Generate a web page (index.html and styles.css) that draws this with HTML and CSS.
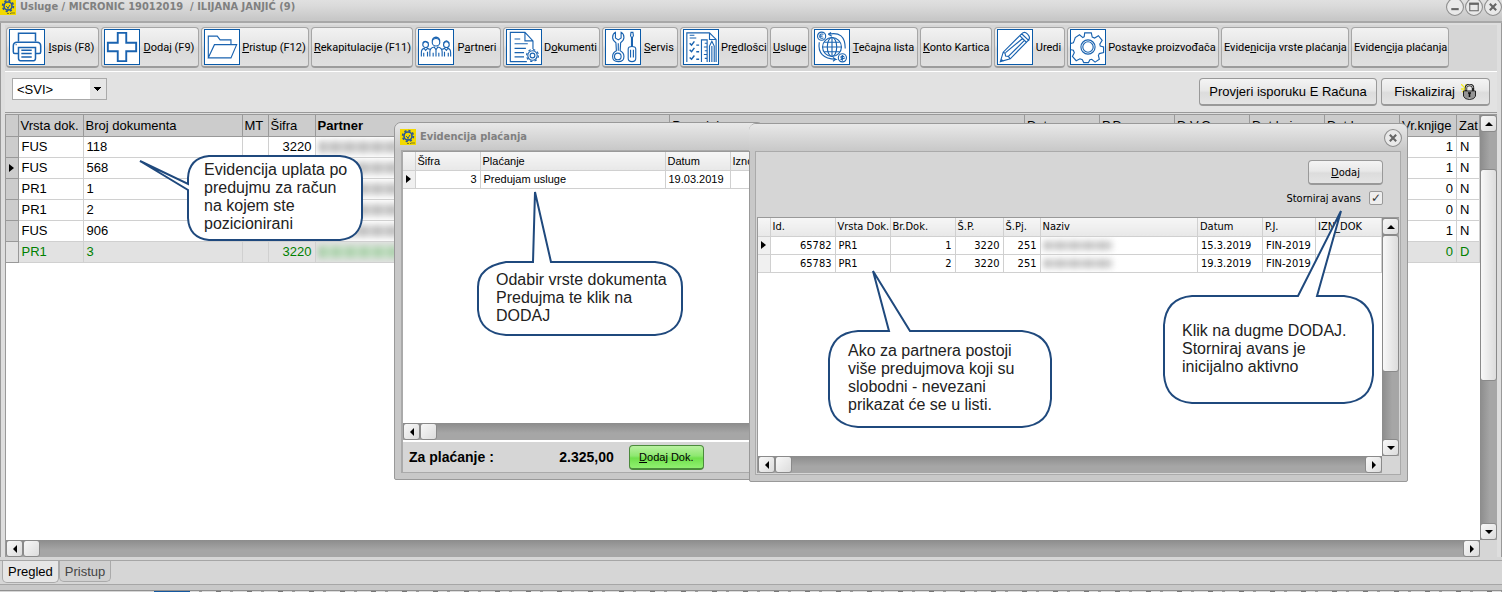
FILE: index.html
```html
<!DOCTYPE html>
<html lang="hr">
<head>
<meta charset="utf-8">
<title>Usluge / MICRONIC</title>
<link rel="stylesheet" href="styles.css">
</head>
<body>
<svg class="defs" width="0" height="0" aria-hidden="true">
  <symbol id="logo" viewBox="0 0 16 16">
    <rect width="16" height="16" fill="#f3d900"/>
    <circle cx="8" cy="7" r="4" fill="none" stroke="#27569a" stroke-width="1.6"/>
    <circle cx="8" cy="7" r="5.4" fill="none" stroke="#27569a" stroke-width="1.6" stroke-dasharray="2.2 2"/>
    <path d="M6 7l2 2 2-3M8 9v3" fill="none" stroke="#27569a"/>
    <path d="M7 14.5h2M10 14.5h1M12 13v2M14 13v2" stroke="#7a7a20"/>
  </symbol>
  <symbol id="close" viewBox="0 0 17 17"><circle cx="8.500" cy="8.500" r="8" fill="#e9e9e9" stroke="#8d8d8d"/><path d="M5.500 5.500l6 6m0-6l-6 6" stroke="#666" stroke-width="2"/></symbol>
</svg>
<div class="app">
  <header class="titlebar">
    <svg class="logo"><use href="#logo"/></svg>
    <h1>Usluge / MICRONIC 19012019&nbsp; / ILIJANA JANJIĆ (9)</h1>
    <div class="winbtns">
      <button aria-label="Minimiziraj"><svg viewBox="0 0 17 17"><circle cx="8.500" cy="8.500" r="8" fill="#e9e9e9" stroke="#8d8d8d"/><path d="M5 10.500h7" stroke="#666" stroke-width="2"/></svg></button>
      <button aria-label="Maksimiziraj"><svg viewBox="0 0 17 17"><circle cx="8.500" cy="8.500" r="8" fill="#e9e9e9" stroke="#8d8d8d"/><path d="M4.500 5v7h8V5z" fill="none" stroke="#666"/><path d="M4 5.500h9" stroke="#666" stroke-width="2"/></svg></button>
      <button aria-label="Zatvori"><svg><use href="#close"/></svg></button>
    </div>
  </header>

  <main class="frame">
    <nav class="toolbar">
      <button class="tool"><svg class="ico" viewBox="0 0 36 36"><path d="M9 12V3.500h18V12M9 25H5q-1.500 0-1.500-2V17q0-4 4-4h21q4 0 4 4v6q0 2-1.500 2h-4" stroke-width="1.600"/><path d="M9 18.500h18V30q0 2.500-2 2.500H11q-2 0-2-2.500zM12 21.500h11M12 25h11M12 28.500h11" stroke-width="1.600"/><path d="M6 15.500h1"/></svg><span><u>I</u>spis (F8)</span></button>
      <button class="tool"><svg class="ico" viewBox="0 0 36 36"><path d="M13.500 3h9v10.500H33v9H22.500V33h-9V22.500H3v-9h10.500z" stroke-width="2"/></svg><span><u>D</u>odaj (F9)</span></button>
      <button class="tool"><svg class="ico" viewBox="0 0 36 36"><path d="M3.500 29.500v-23H13l3 4h11.500v5M3.500 29.500L10 15.500h23.500l-6 14z"/></svg><span><u>P</u>ristup (F12)</span></button>
      <button class="tool"><span><u>R</u>ekapitulacije (F11)</span></button>
      <button class="tool"><svg class="ico" viewBox="0 0 36 36"><circle cx="18" cy="13" r="4"/><path d="M14 12q0-4 4-4.500 4 .5 4 4.500M11.500 28v-5q0-4 4.500-5l2 3 2-3q4.500 1 4.500 5v5M15 28v-4m6 4v-4m-3-3v7"/><circle cx="7" cy="15.500" r="3"/><circle cx="29" cy="15.500" r="3"/><path d="M4 14q2-4 6 0M26 14q3-5 6 0M2.500 28v-4q0-4 3-4.500l1.500 2 2-2 2.500 1M33.500 28v-4q0-4-3-4.500l-1.500 2-2-2-2.500 1M5 28v-4m4 4v-5m18 5v-5m4 5v-4"/></svg><span>P<u>a</u>rtneri</span></button>
      <button class="tool"><svg class="ico" viewBox="0 0 36 36"><path d="M21 33.500H3.500v-31H19l8.500 9V20M19 2.500v9h8.500M8 9.500h6M8 14.500h14M8 19.500h12M8 24h10M8 28.500h10"/><circle cx="27" cy="27" r="2.500"/><circle cx="27" cy="27" r="5"/><circle cx="27" cy="27" r="6.300" stroke-dasharray="2.500 2.400"/></svg><span>D<u>o</u>kumenti</span></button>
      <button class="tool"><svg class="ico" viewBox="0 0 36 36"><path d="M10 2.500v6l3 2 3-2v-6q3 1.500 3 5.500 0 3-3.500 5.500L15 22q4 2 4 6 0 5.500-6 5.500T7 28q0-4 4-6l-.5-8.500Q7 11 7 8q0-4 3-5.500z"/><circle cx="12.500" cy="28" r="3.500"/><path d="M13 14v8M27 17.500V8l-1-2 .5-3.500h2L29 6l-1 2v9.500M23.500 20q0-2.500 4-2.500t4 2.500v10q0 3.500-4 3.500t-4-3.500zM26 21v8m3-8v8"/></svg><span><u>S</u>ervis</span></button>
      <button class="tool"><svg class="ico" viewBox="0 0 36 36"><path d="M3 34V3h24l7 7v24M27 3v7h7M6 5.500h5M6 8.500h7"/><path d="M6 14l2 2 3-4m2 4h3M6 21l2 2 3-4m2 4h3M6 29l2 2 3-4m2 4h3" stroke-width="1.500"/><path d="M18.500 34V10.500h6V34M22 14h2M21 18h3M22 22h2M21 26h3M22 30h2M27 34V17l2.500-5 2.500 5v17M29.500 17v17"/></svg><span>Pr<u>e</u>dlošci</span></button>
      <button class="tool"><span><u>U</u>sluge</span></button>
      <button class="tool"><svg class="ico" viewBox="0 0 36 36"><circle cx="18" cy="18" r="10"/><ellipse cx="18" cy="18" rx="5" ry="10"/><path d="M18 8v20M8 18h20M10 13h16M10 23h16M14 4.500q18-4 18 15M14 4.500l3-2m-3 2l4 2M4.500 13Q2 30 22 31l-3-2m3 2l-3 2"/><circle cx="7" cy="6.500" r="4.300"/><path d="M9 4.500q-4-1-4 2t4 2M5 6.500h3"/><circle cx="29" cy="29.500" r="4.300"/><path d="M31 28q-4-1-3.500 1t3 1-3.500 1.500M29 26.500v6"/></svg><span><u>T</u>ečajna lista</span></button>
      <button class="tool"><span><u>K</u>onto Kartica</span></button>
      <button class="tool"><svg class="ico" viewBox="0 0 36 36"><path d="M2.500 33.500l3-10L25 4q3-3 6 0l1.500 2q2 3-1 5.500L13 30.500zM5.500 23.500l2 1 .5 3 3 .5 2 2.500M23 6l7.500 7.500M25 4l8 7.500M8 24L26 9M11 28L28 11M3 31l3 2"/></svg><span>Uredi</span></button>
      <button class="tool"><svg class="ico" viewBox="0 0 36 36"><path d="M14.500 3h7l1 4.500 2.500 1 4-2.500 4 5-2.500 4 .5 2 3.500 1v6l-4.500 1-1 2 1 4-4.500 3-3.500-3-2 .5-1.500 3h-5l-1.500-3-2.500-1-4 2-4-4.500 2-4-1-2.500-4-1v-6l4-1 1-2.500L4.500 8 9 5l3.500 3 1.500-1z"/><circle cx="18" cy="18" r="7.500"/><circle cx="18" cy="18" r="5.500"/></svg><span>Posta<u>v</u>ke proizvođača</span></button>
      <button class="tool"><span>Evide<u>n</u>icija vrste plaćanja</span></button>
      <button class="tool"><span>Eviden<u>c</u>ija plaćanja</span></button>
    </nav>

    <section class="filter">
      <select aria-label="Filter"><option>&lt;SVI&gt;</option></select>
      <div class="actions">
        <button class="btn">Provjeri isporuku E Računa</button>
        <button class="btn">Fiskaliziraj <svg viewBox="0 0 16 16" width="16" height="16"><path d="M0 0l4 4M0 5h4M5 0v3M1 8l3-2" stroke="#f4ec20" stroke-width="1.300"/><path d="M5 7V4q0-3 3.500-3t3.500 3v3" fill="none" stroke="#222" stroke-width="2.400"/><path d="M5 6V4q0-3 3.500-3t3.500 3" fill="none" stroke="#ddd" stroke-width=".8"/><path d="M2.500 7h12v5q-1 3.500-6 3.500T2.500 12z" fill="#b8b8b8" stroke="#222"/><path d="M3 9h11M3 11h11M4 13h9" stroke="#555" stroke-width=".7"/><path d="M7 9h3M8.500 9v4" stroke="#111" stroke-width="1.600"/></svg></button>
      </div>
    </section>

    <section class="gridbox">
      <div class="view">
        <table class="grid main">
          <colgroup><col class="w12"><col class="w65"><col class="w159"><col class="w26"><col class="w47"><col><col><col class="w75"><col class="w75"><col class="w75"><col class="w75"><col class="w75"><col class="w57"><col class="w23"></colgroup>
          <thead><tr><th></th><th>Vrsta dok.</th><th>Broj dokumenta</th><th>MT</th><th>Šifra</th><th class="strong">Partner</th><th>Pos. dok.</th><th>Datum</th><th>P.D.</th><th>D.V.O.</th><th>Dat.knj.</th><th>Dat.k.</th><th>Vr.knjige</th><th>Zat</th></tr></thead>
          <tbody>
            <tr><td></td><td>FUS</td><td>118</td><td></td><td class="r">3220</td><td><i class="smudge"></i></td><td></td><td></td><td></td><td></td><td></td><td></td><td class="r">1</td><td>N</td></tr>
            <tr><td><b class="mark"></b></td><td>FUS</td><td>568</td><td></td><td></td><td><i class="smudge"></i></td><td></td><td></td><td></td><td></td><td></td><td></td><td class="r">1</td><td>N</td></tr>
            <tr><td></td><td>PR1</td><td>1</td><td></td><td></td><td><i class="smudge"></i></td><td></td><td></td><td></td><td></td><td></td><td></td><td class="r">0</td><td>N</td></tr>
            <tr><td></td><td>PR1</td><td>2</td><td></td><td></td><td><i class="smudge"></i></td><td></td><td></td><td></td><td></td><td></td><td></td><td class="r">0</td><td>N</td></tr>
            <tr><td></td><td>FUS</td><td>906</td><td></td><td></td><td><i class="smudge"></i></td><td></td><td></td><td></td><td></td><td></td><td></td><td class="r">1</td><td>N</td></tr>
            <tr class="on"><td></td><td>PR1</td><td>3</td><td></td><td class="r">3220</td><td><i class="smudge green"></i></td><td></td><td></td><td></td><td></td><td></td><td></td><td class="r">0</td><td>D</td></tr>
          </tbody>
        </table>
      </div>
      <div class="vbar"><button class="arr up" aria-label="Gore"></button><span class="gap"></span><span class="thumb"></span><span class="rest"></span><button class="arr down" aria-label="Dolje"></button></div>
      <div class="hbar"><button class="arr left" aria-label="Lijevo"></button><span class="thumb"></span><span class="rest"></span><button class="arr right" aria-label="Desno"></button></div>
      <div class="corner"></div>
    </section>
  </main>

  <footer class="tabs"><button class="tab active">Pregled</button><button class="tab">Pristup</button></footer>
  <div class="edge"></div>
  <div class="strip"></div>

  <section class="window pay">
    <header class="wtitle"><svg class="logo"><use href="#logo"/></svg><h2>Evidencija plaćanja</h2></header>
    <div class="client">
      <div class="view">
        <table class="grid small ms">
          <colgroup><col class="w12"><col class="w65"><col class="w185"><col class="w65"><col></colgroup>
          <thead><tr><th></th><th>Šifra</th><th>Plaćanje</th><th>Datum</th><th>Iznos</th></tr></thead>
          <tbody><tr><td><b class="mark"></b></td><td class="r">3</td><td>Predujam usluge</td><td>19.03.2019</td><td></td></tr></tbody>
        </table>
      </div>
      <div class="hbar"><button class="arr left" aria-label="Lijevo"></button><span class="thumb"></span><span class="rest"></span></div>
      <div class="sum"><strong>Za plaćanje :</strong><strong class="total">2.325,00</strong><button class="btn go"><span><u>D</u>odaj Dok.</span></button></div>
    </div>
  </section>

  <section class="window pick">
    <header class="wtitle"><button class="x" aria-label="Zatvori"><svg><use href="#close"/></svg></button></header>
    <div class="client">
      <div class="opts">
        <button class="btn add"><span><u>D</u>odaj</span></button>
        <label>Storniraj avans <input type="checkbox" checked></label>
      </div>
      <div class="gridbox">
        <div class="view">
          <table class="grid small">
            <colgroup><col class="w12"><col class="w65"><col class="w55"><col class="w65"><col class="w48"><col class="w37"><col><col class="w65"><col class="w53"><col class="w66"></colgroup>
            <thead><tr><th></th><th>Id.</th><th>Vrsta Dok.</th><th>Br.Dok.</th><th>Š.P.</th><th>Š.Pj.</th><th>Naziv</th><th>Datum</th><th>P.J.</th><th>IZN_DOK</th></tr></thead>
            <tbody>
              <tr><td><b class="mark"></b></td><td class="r">65782</td><td>PR1</td><td class="r">1</td><td class="r">3220</td><td class="r">251</td><td><i class="smudge short"></i></td><td>15.3.2019</td><td>FIN-2019</td><td></td></tr>
              <tr><td></td><td class="r">65783</td><td>PR1</td><td class="r">2</td><td class="r">3220</td><td class="r">251</td><td><i class="smudge short"></i></td><td>19.3.2019</td><td>FIN-2019</td><td></td></tr>
            </tbody>
          </table>
        </div>
        <div class="vbar"><button class="arr up" aria-label="Gore"></button><span class="thumb"></span><span class="rest"></span><button class="arr down" aria-label="Dolje"></button></div>
        <div class="hbar"><button class="arr left" aria-label="Lijevo"></button><span class="thumb"></span><span class="rest"></span><button class="arr right" aria-label="Desno"></button></div>
        <div class="corner"></div>
      </div>
    </div>
  </section>

  <aside class="note n1">
    <svg viewBox="0 0 224 86"><path d="M70 1h131q22 2 22 22v40q-2 20-22 22H70q-20-2-21-22V35L1 6l48 23v-6Q50 3 70 1z"/></svg>
    <p>Evidencija uplata po<br>predujmu za račun<br>na kojem ste<br>pozicionirani</p>
  </aside>
  <aside class="note n2">
    <svg viewBox="0 0 208 146"><path d="M30 71h27L59 1l16 70h104q27 3 27 25v23q-2 23-27 25H30q-26-2-28-25V96q0-20 28-25z"/></svg>
    <p>Odabir vrste dokumenta<br>Predujma te klik na<br>DODAJ</p>
  </aside>
  <aside class="note n3">
    <svg viewBox="0 0 224 160"><path d="M30 62h31L45 2l37 60h112q27 3 29 28v40q-2 26-29 28H30q-27-2-29-28V90q2-26 29-28z"/></svg>
    <p>Ako za partnera postoji<br>više predujmova koji su<br>slobodni - nevezani<br>prikazat će se u listi.</p>
  </aside>
  <aside class="note n4">
    <svg viewBox="0 0 212 196"><path d="M29 87h106L178 2l-24 85h27q27 3 29 29v50q-2 26-29 28H29q-26-2-28-28v-50q2-27 28-29z"/></svg>
    <p>Klik na dugme DODAJ.<br>Storniraj avans je<br>inicijalno aktivno</p>
  </aside>
</div>
</body>
</html>
```
FILE: styles.css
```css
* { box-sizing: border-box; }
html, body { height: 100%; }
body { margin: 0; overflow: hidden; background: #d6d6d6; color: #000; font: 11px "DejaVu Sans Condensed", "Noto Sans", sans-serif; }
button { margin: 0; padding: 0; border: 0; background: none; color: inherit; font: inherit; white-space: nowrap; }
h1, h2, p { margin: 0; }
.defs { position: absolute; }
.app { position: relative; display: flex; flex-direction: column; height: 100vh; overflow: hidden; }

.titlebar { display: flex; align-items: center; gap: 4px; height: 23px; padding-bottom: 8px; background: linear-gradient(#e0e0e0, #dadada 30%, #c8c8c8 90%); border-bottom: 2px solid #a8a8a8; }
.titlebar h1, .wtitle h2 { flex: 1; color: #808080; font-size: 11px; font-weight: bold; }
.logo { width: 16px; height: 16px; }
.winbtns { display: flex; gap: 1px; }
.winbtns svg, .x svg { display: block; width: 18px; height: 18px; }

.frame { flex: 1; min-height: 0; display: flex; flex-direction: column; padding: 2px 4px 0; border-left: 1px solid #999; border-right: 1px solid #999; background: #dedede; }
.toolbar { display: grid; grid-template-columns: 93fr 98fr 108fr 102fr 86fr 97fr 76fr 88fr 39fr 107fr 72fr 71fr 152fr 128fr 98fr 46fr; gap: 2px; height: 47px; padding: 2px 0 3px 1px; background: #d6d6d6; border-bottom: 1px solid #fff; }
.tool { min-width: 0; display: flex; align-items: center; gap: 2px; padding: 0 2px; border: 1px solid #a6a6a6; border-bottom: 2px solid #9c9c9c; border-radius: 4px; background: linear-gradient(#f2f2f2, #e6e6e6 45%, #dadada 55%, #e0e0e0); font-family: Roboto, sans-serif; }
.tool span { flex: 1; text-align: center; }
.ico { flex: none; width: 36px; height: 36px; border: 1px solid #0a5aa8; background: #fff; fill: none; stroke: #1a63b0; stroke-width: 1.2; }

.filter { display: flex; justify-content: space-between; align-items: flex-start; height: 41px; padding: 6px 7px 0 7px; background: #e2e2e2; border-bottom: 1px solid #999; font: 13px "Liberation Sans", sans-serif; }
select { appearance: none; width: 95px; height: 22px; padding: 0 4px; border: 1px solid #aaa; border-radius: 0; color: #000; font: inherit; background: linear-gradient(#000, #000) right 5px top 8px / 7px 1px no-repeat, linear-gradient(#000, #000) right 6px top 9px / 5px 1px no-repeat, linear-gradient(#000, #000) right 7px top 10px / 3px 1px no-repeat, linear-gradient(#000, #000) right 8px top 11px / 1px 1px no-repeat, linear-gradient(#e6e6e6, #e6e6e6) right / 16px no-repeat, #fff; }
.actions { display: flex; gap: 4px; }
.btn { height: 28px; padding: 0 7px; border: 1px solid #999; border-bottom-width: 2px; border-radius: 4px; background: linear-gradient(#f4f4f4, #e8e8e8 45%, #dcdcdc 55%, #e4e4e4); }
.filter .btn { display: flex; align-items: center; justify-content: center; gap: 6px; min-width: 109px; }
.filter .btn:first-child { min-width: 178px; }

.gridbox { flex: 1; min-height: 0; display: grid; grid-template: minmax(0, 1fr) 17px / minmax(0, 1fr) 17px; margin-top: 1px; border-top: 1px solid #999; border-left: 1px solid #999; background: #d6d6d6; }
.view { overflow: hidden; background: #fff; }
.grid { width: 100%; table-layout: fixed; border-collapse: collapse; }
.grid th, .grid td { padding: 0 2px; border-right: 1px solid #d0d0d0; border-bottom: 1px solid #d0d0d0; overflow: hidden; white-space: nowrap; text-align: left; font-weight: normal; }
.main { font: 13px "Liberation Sans", sans-serif; }
.main tr { height: 21px; }
.main th { border-color: #999; background: #ccc; }
.main td:first-child { border-color: #999; background: #ccc; }
.main td + td { padding: 0 3px; }
.grid .strong { font-weight: bold; }
.grid .r { text-align: right; }
.main .on td { color: #008000; background: #e2e2e2; }
.small th { background: linear-gradient(#f6f6f6, #e8e8e8); }
.small tr { height: 18px; }
.small td:first-child { background: #f0f0f0; }
.small td + td { padding: 0 3px; }
.ms, .go { font-family: "Liberation Sans", sans-serif; }
.mark { display: block; width: 0; border: 4px solid transparent; border-left: 5px solid #000; border-right: 0; margin-left: 1px; }
.smudge { display: block; width: 110px; height: 12px; background: repeating-linear-gradient(90deg, #888 0 4px, #ccc 4px 8px, #999 8px 11px, #ddd 11px 14px); filter: blur(3px); opacity: .7; }
.smudge.green { background: repeating-linear-gradient(90deg, #7b7 0 4px, #bdb 4px 8px, #8c8 8px 11px, #ded 11px 14px); }
.smudge.short { width: 68px; height: 9px; }
.w12 { width: 12px; } .w23 { width: 23px; } .w26 { width: 26px; } .w37 { width: 37px; }
.w47 { width: 47px; } .w48 { width: 48px; } .w53 { width: 53px; } .w55 { width: 55px; }
.w57 { width: 57px; } .w65 { width: 65px; } .w66 { width: 66px; } .w75 { width: 75px; }
.w159 { width: 159px; } .w185 { width: 185px; }

.vbar, .hbar { display: flex; background: linear-gradient(#8c8c8c, #a6a6a6 60%); }
.vbar { flex-direction: column; background: linear-gradient(90deg, #8c8c8c, #a6a6a6 60%); }
.hbar { height: 17px; }
.arr, .thumb { flex: none; display: grid; place-items: center; width: 17px; height: 17px; border: 1px solid #8a8a8a; border-radius: 3px; background: linear-gradient(135deg, #f8f8f8, #dcdcdc); }
.rest { flex: 1; }
.arr::before { content: ""; border: 4px solid transparent; }
.up::before { border-bottom-color: #000; border-top: 0; }
.down::before { border-top-color: #000; border-bottom: 0; }
.left::before { border-right-color: #000; border-left: 0; }
.right::before { border-left-color: #000; border-right: 0; }
.gap { flex: 37; }
.vbar .thumb { flex: 212; background: linear-gradient(90deg, #f8f8f8, #dcdcdc); }
.frame .vbar .rest { flex: 143; }
.pick .vbar .thumb { flex: 136; }
.pick .vbar .rest { flex: 68; }

.tabs { display: flex; align-items: flex-start; height: 24px; margin-top: 3px; padding-left: 2px; border-top: 1px solid #a6a6a6; font: 13px "Liberation Sans", sans-serif; }
.tab { height: 21px; padding: 0 5px; border: 1px solid #aaa; border-top: 0; border-radius: 0 0 5px 5px; background: #d0d0d0; color: #444; }
.tab.active { height: 22px; background: #e6e6e6; color: #000; }
.edge { height: 7px; background: #c8c8c8; border-top: 1px solid #a6a6a6; border-bottom: 1px solid #909090; }
.strip { height: 1px; margin-left: 154px; background: linear-gradient(90deg, #1458a0 36px, transparent 36px), repeating-linear-gradient(90deg, #777 0 5px, #ddd 5px 14px, #999 14px 17px, #ddd 17px 31px); }

.window { position: absolute; display: flex; flex-direction: column; padding: 0 6px 6px; border: 1px solid #999; border-radius: 7px 7px 2px 2px; background: #c8c8c8; }
.wtitle { display: flex; align-items: center; gap: 4px; height: 27px; margin: 0 -6px; padding: 0 5px; border-radius: 6px 6px 0 0; background: linear-gradient(#e8e8e8, #d8d8d8 50%, #c8c8c8); }
.client { flex: 1; min-height: 0; display: flex; flex-direction: column; border: 1px solid #aaa; background: #d6d6d6; }
.pay { left: 394px; top: 122px; width: 370px; height: 358px; }
.pay .client { border-left-width: 2px; }
.pay .view { flex: 1; border-top: 1px solid #999; }
.sum { display: flex; align-items: center; height: 32px; padding-left: 6px; border-top: 2px solid #fff; font: bold 14px "Liberation Sans", sans-serif; }
.total { width: 120px; text-align: right; }
.go { height: 25px; min-width: 75px; margin-left: 15px; border-color: #4b8a3c; font-size: 11px; font-weight: normal; background: linear-gradient(#b8f0a0, #8ee870 45%, #70e04c 55%, #90f070); }
.pick { left: 749px; top: 123px; width: 659px; height: 359px; padding: 0 6px 6px 5px; }
.pick .wtitle { justify-content: flex-end; height: 27px; }
.opts { display: flex; flex-direction: column; align-items: flex-end; gap: 6px; height: 65px; padding: 8px 17px 0 0; }
.add { width: 75px; height: 25px; }
.opts label { display: flex; align-items: center; gap: 8px; }
.opts input { appearance: none; width: 14px; height: 14px; margin: 0; border: 1px solid #999; border-radius: 2px; background: #eee; display: grid; place-items: center; }
.opts input:checked::before { content: "✓"; font: bold 12px/12px "DejaVu Sans", sans-serif; color: #333; }
.pick .gridbox { margin: 0 1px 1px 1px; }

.note { position: absolute; font: 16px/18px "Liberation Sans", sans-serif; color: #222; }
.note svg { position: absolute; left: 0; top: 0; width: 100%; height: 100%; fill: #fff; stroke: #1f497d; stroke-width: 2; }
.note p { position: relative; white-space: nowrap; }
.n1 { left: 139px; top: 155px; width: 224px; height: 86px; padding: 6px 0 0 65px; }
.n2 { left: 476px; top: 191px; width: 208px; height: 146px; padding: 80px 0 0 20px; }
.n3 { left: 828px; top: 269px; width: 224px; height: 160px; padding: 73px 0 0 20px; }
.n4 { left: 1163px; top: 209px; width: 212px; height: 196px; padding: 113px 0 0 19px; }
```
